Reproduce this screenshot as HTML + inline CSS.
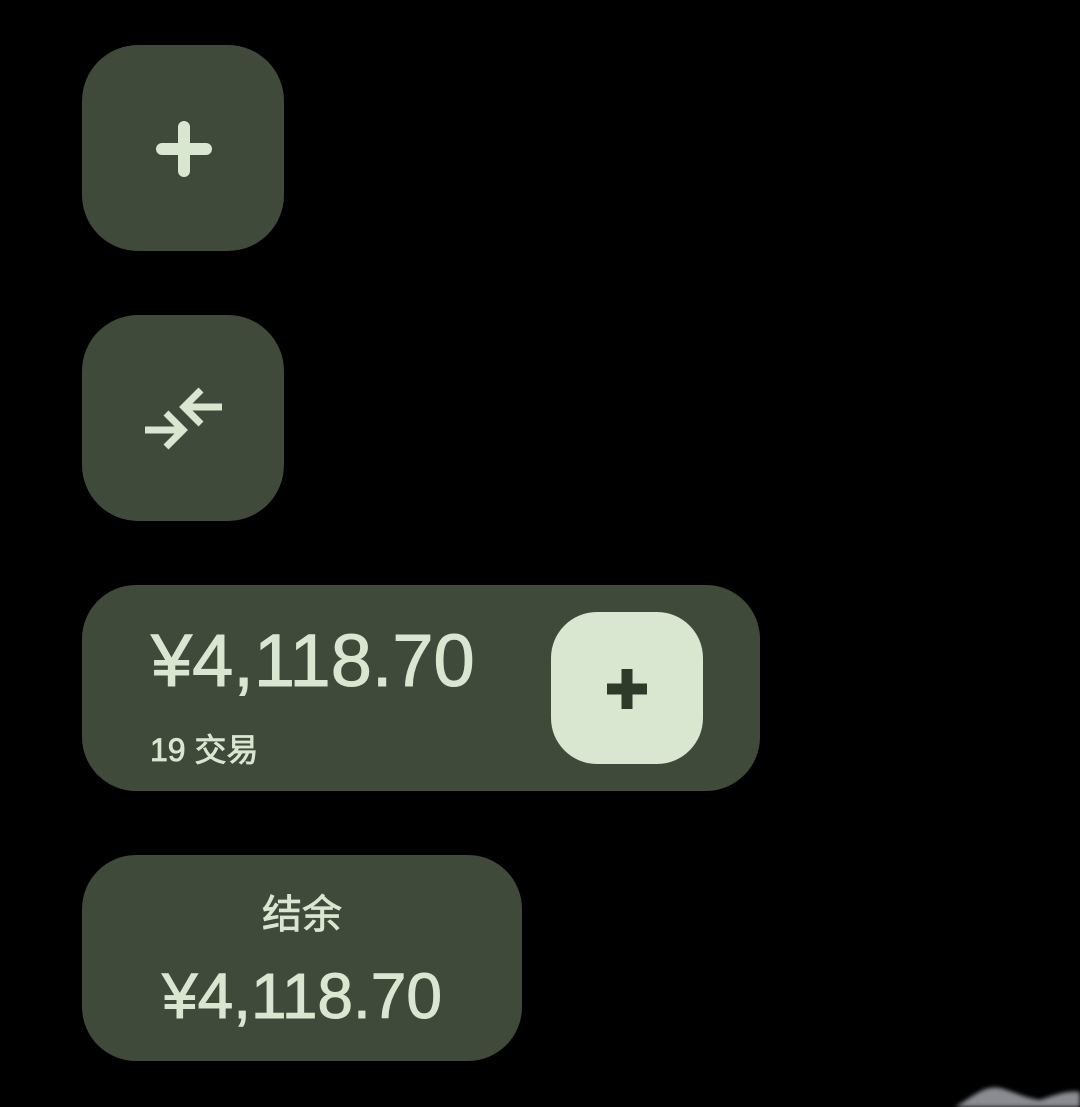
<!DOCTYPE html>
<html><head><meta charset="utf-8"><style>
html,body{margin:0;padding:0;background:#000;width:1080px;height:1107px;overflow:hidden;position:relative;font-family:"Liberation Sans","Noto Sans CJK SC",sans-serif;color:#d9e7d0}
.c{position:absolute;background:#3f4a3a}
.t{-webkit-text-stroke:1px #d9e7d0}
</style></head><body>
<div class="c" style="left:82px;top:45px;width:202px;height:206px;border-radius:56px"></div>
<svg style="position:absolute;left:0;top:0" width="1080" height="1107">
<g stroke="#d9e7d0" stroke-width="12" stroke-linecap="round"><line x1="184" y1="127" x2="184" y2="171"/><line x1="162" y1="149" x2="206" y2="149"/></g>
</svg>
<div class="c" style="left:82px;top:315px;width:202px;height:206px;border-radius:56px"></div>
<svg style="position:absolute;left:0;top:0" width="1080" height="1107">
<g stroke="#d9e7d0" stroke-width="7" fill="none">
<line x1="145" y1="430" x2="183" y2="430"/><polyline points="166,413 183,430 166,447"/>
<line x1="184" y1="407" x2="222" y2="407"/><polyline points="201,390 184,407 201,424"/>
</g>
<path d="M955 1107 C975 1095 985 1085 1000 1088 C1015 1092 1025 1098 1040 1100 C1055 1095 1068 1090 1080 1092 L1080 1107 Z" fill="#8a8c92" filter="blur(2px)"/>
</svg>
<div class="c" style="left:82px;top:585px;width:678px;height:206px;border-radius:54px"></div>
<div class="t" style="position:absolute;left:151px;top:618px;font-size:74px;line-height:86px;white-space:nowrap">¥4,118.70</div>
<div class="t" style="position:absolute;left:150px;top:728px;font-size:32px;line-height:44px;white-space:nowrap;-webkit-text-stroke-width:0.8px">19 交易</div>
<div style="position:absolute;left:551px;top:612px;width:152px;height:152px;border-radius:46px;background:#d9e7d0"></div>
<svg style="position:absolute;left:0;top:0" width="1080" height="1107">
<g stroke="#2e3a2a" stroke-width="11"><line x1="627" y1="669" x2="627" y2="709"/><line x1="607" y1="689" x2="647" y2="689"/></g>
</svg>
<div class="c" style="left:82px;top:855px;width:440px;height:206px;border-radius:54px"></div>
<div class="t" style="position:absolute;left:82px;width:440px;top:890px;text-align:center;font-size:40px;line-height:50px;-webkit-text-stroke-width:0.8px">结余</div>
<div class="t" style="position:absolute;left:82px;width:440px;top:958px;text-align:center;font-size:64px;line-height:76px;white-space:nowrap">¥4,118.70</div>
</body></html>
